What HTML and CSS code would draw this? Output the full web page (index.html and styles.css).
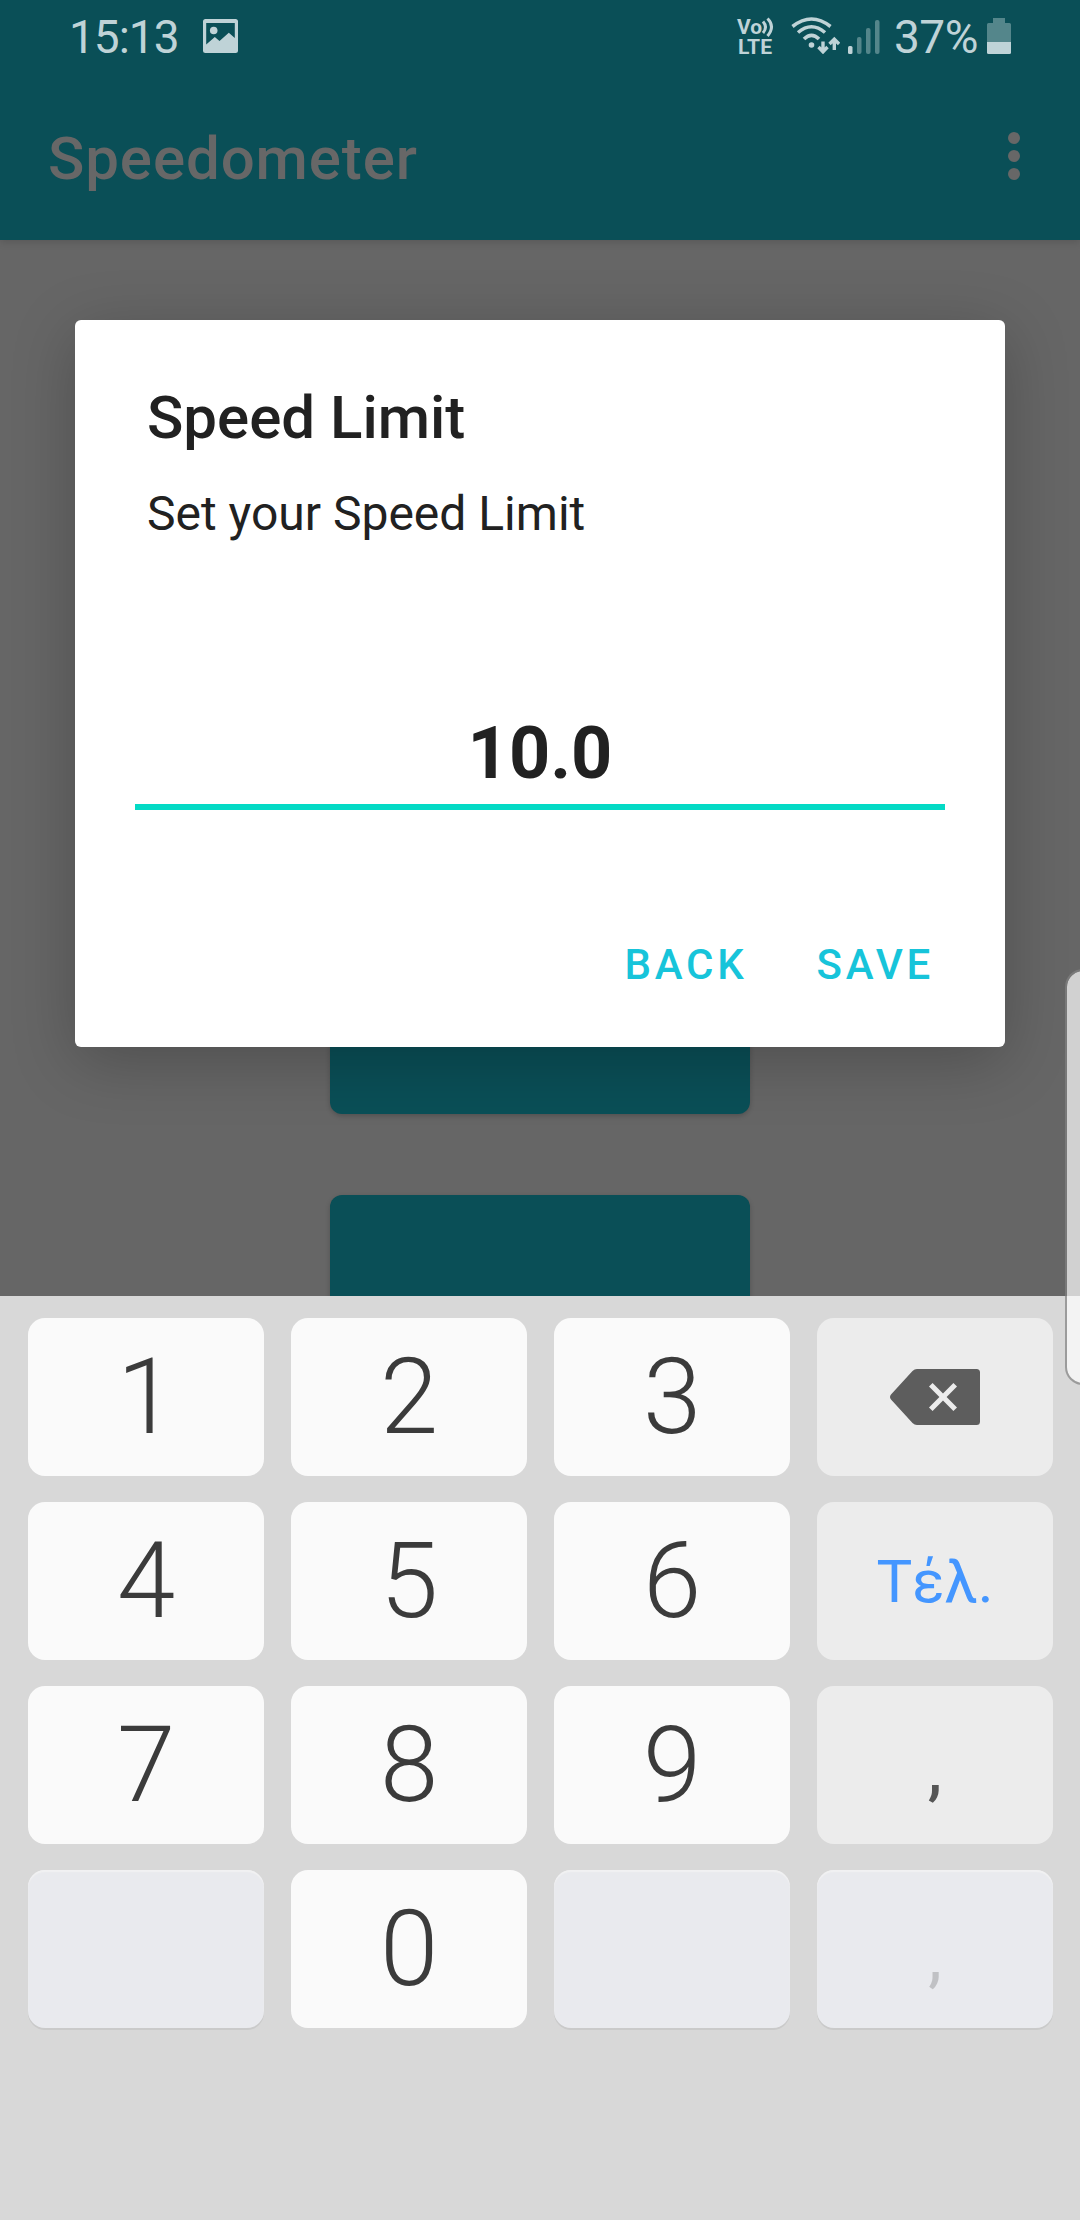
FILE: index.html
```html
<!DOCTYPE html>
<html lang="en">
<head>
<meta charset="utf-8">
<title>Speedometer</title>
<link rel="stylesheet" href="styles.css">
</head>
<body>
<div class="screen">
  <div class="app">
    <header class="top">
      <div class="status">
        <span class="clock">15:13</span>
        <svg class="ic-image" width="35" height="34" viewBox="0 0 35 34"><path fill-rule="evenodd" d="M2.500 0h30a2.500 2.500 0 0 1 2.500 2.500v29a2.500 2.500 0 0 1-2.500 2.500h-30A2.500 2.500 0 0 1 0 31.500v-29A2.500 2.500 0 0 1 2.500 0zM3.200 4v21.600l8.600-7.600 4.700 4 9.300-8.200 6 5.200V4z"/><circle cx="10.700" cy="11.500" r="3.800"/></svg>
        <svg class="ic-volte" width="38" height="44" viewBox="0 -3 38 44">
          <text class="volte-text" x="0" y="16.500" textLength="25" lengthAdjust="spacingAndGlyphs">Vo</text>
          <text class="volte-text" x="1" y="36.500" textLength="34" lengthAdjust="spacingAndGlyphs">LTE</text>
          <path class="line thin" d="M26 4.500q5 5.500 0 11.500M30.500 1.500q8 8 0 17.500"/>
        </svg>
        <svg class="ic-wifi" width="49" height="37" viewBox="0 0 49 37">
          <path class="line" d="M1.500 9.500Q20.500-5.500 39.500 9.500M7 15.500Q20.500 4 34 15.500M13 22Q20.500 14.500 28 22"/>
          <circle cx="20.500" cy="28" r="2.800"/>
          <path class="line arrow" d="M32 24.500v10M27.500 30l4.500 4.800 4.500-4.800M43.300 33V22.500M38.500 27l4.800-4.800 4.800 4.800"/>
        </svg>
        <svg class="ic-signal" width="32" height="34" viewBox="0 0 32 34"><rect x="0" y="26" width="4.500" height="8" rx="1.500"/><g class="dim"><rect x="9" y="17" width="4.500" height="17" rx="2"/><rect x="18" y="8" width="4.500" height="26" rx="2"/><rect x="27" y="0" width="4.500" height="34" rx="2"/></g></svg>
        <span class="percent">37%</span>
        <svg class="ic-battery" width="24" height="36" viewBox="0 0 24 36"><path class="dim" d="M6 0h12v5h4.500A1.500 1.500 0 0 1 24 6.500V24H0V6.500A1.500 1.500 0 0 1 1.500 5H6z"/><path d="M0 24h24v10.500a1.500 1.500 0 0 1-1.500 1.500h-21A1.500 1.500 0 0 1 0 34.500z"/></svg>
      </div>
      <div class="appbar">
        <h1 class="app-title">Speedometer</h1>
        <div class="overflow"><i></i><i></i><i></i></div>
      </div>
    </header>
    <main class="content">
      <div class="block"></div>
      <div class="block"></div>
    </main>
    <section class="dialog">
      <h2 class="dialog-title">Speed Limit</h2>
      <p class="dialog-text">Set your Speed Limit</p>
      <div class="field">10.0</div>
      <div class="actions"><span>BACK</span><span>SAVE</span></div>
    </section>
  </div>
  <div class="keyboard">
    <div class="key">1</div><div class="key">2</div><div class="key">3</div>
    <div class="key fn"><svg class="ic-del" width="90" height="56" viewBox="0 0 90 56"><path fill-rule="evenodd" d="M27 0h59.500A3.500 3.500 0 0 1 90 3.500v49a3.500 3.500 0 0 1-3.500 3.500H27q-2.500 0-4.500-2L1 30.500q-2-2.500 0-5L22.500 2Q24.500 0 27 0zM39 17.600L49.400 28 39 38.400 42.600 42 53 31.600 63.400 42 67 38.400 56.600 28 67 17.600 63.400 14 53 24.400 42.600 14z"/></svg></div>
    <div class="key">4</div><div class="key">5</div><div class="key">6</div>
    <div class="key fn done">Τέλ.</div>
    <div class="key">7</div><div class="key">8</div><div class="key">9</div>
    <div class="key fn comma">,</div>
    <div class="key off"></div><div class="key">0</div><div class="key off"></div>
    <div class="key off comma">,</div>
  </div>
  <div class="edge"></div>
</div>
</body>
</html>
```

FILE: styles.css
```css
* { box-sizing: border-box; }

body {
  margin: 0;
  font-family: Roboto, "Liberation Sans", sans-serif;
}

.screen {
  position: relative;
  width: 1080px;
  height: 2220px;
  overflow: hidden;
  display: flex;
  flex-direction: column;
}

.app {
  position: relative;
  height: 1296px;
  overflow: hidden;
  background: #666;
}

.top {
  position: relative;
  height: 240px;
  background: #0a4f57;
  box-shadow: 0 2px 8px rgba(0, 0, 0, .15);
}

.status {
  height: 72px;
  display: flex;
  align-items: flex-start;
  padding: 0 69px 0 69px;
  color: #bfd3d7;
  fill: #bfd3d7;
  font-size: 46px;
  line-height: 74px;
}

.status svg { flex: none; }
.dim { fill: #54868b; }
.line { fill: none; stroke: #bfd3d7; stroke-width: 3.600; }
.thin { stroke-width: 3; }
.arrow { stroke-width: 3.400; }
.volte-text { font-size: 21px; font-weight: 700; }

.clock { width: 134px; letter-spacing: -1px; }
.ic-image { margin-top: 19px; }
.ic-volte { margin: 14px 0 0 499px; overflow: visible; }
.ic-wifi { margin: 17px 0 0 16px; }
.ic-signal { margin: 20px 0 0 8px; }
.percent { width: 93px; margin-left: 14px; letter-spacing: -.5px; white-space: nowrap; }
.ic-battery { margin: 18px 0 0 0; }

.appbar {
  height: 168px;
  display: flex;
  justify-content: space-between;
  padding: 0 60px 0 48px;
  color: #676767;
}

.app-title {
  margin: 52px 0 0;
  font-size: 60px;
  font-weight: 500;
  letter-spacing: .9px;
  line-height: 70px;
}

.overflow {
  display: flex;
  flex-direction: column;
  gap: 6px;
  padding-top: 60px;
}

.overflow i { width: 12px; height: 12px; border-radius: 50%; background: #676767; }

.content {
  display: flex;
  flex-direction: column;
  align-items: center;
  gap: 81px;
  padding-top: 715px;
}

.block {
  width: 420px;
  height: 159px;
  flex: none;
  border-radius: 12px;
  background: #0a4f57;
  box-shadow: 0 2px 5px rgba(0, 0, 0, .2);
}

.dialog {
  position: absolute;
  left: 75px;
  top: 320px;
  width: 930px;
  height: 727px;
  padding: 63px 60px 0;
  border-radius: 6px;
  background: #fff;
  color: #212121;
  box-shadow: 0 14px 64px rgba(0, 0, 0, .23);
}

.dialog-title {
  margin: 0 0 33px 12px;
  font-size: 60px;
  font-weight: 500;
  line-height: 70px;
}

.dialog-text {
  margin: 0 0 170px 12px;
  font-size: 48px;
  line-height: 56px;
}

.field {
  height: 98px;
  border-bottom: 6px solid #03dac5;
  font-size: 72px;
  font-weight: 700;
  line-height: 84px;
  text-align: center;
}

.actions {
  display: flex;
  justify-content: flex-end;
  gap: 69px;
  margin-top: 130px;
  padding-right: 11px;
  color: #17c4da;
  font-size: 42px;
  font-weight: 500;
  letter-spacing: 3.750px;
  line-height: 50px;
}

.keyboard {
  height: 924px;
  display: grid;
  grid-template-columns: repeat(4, 236px);
  grid-auto-rows: 158px;
  align-content: start;
  gap: 26px 27px;
  padding: 22px 0 0 28px;
  background: #d8d8d8;
}

.key {
  border-radius: 17px;
  background: #fafafa;
  color: #3b3b3b;
  font-size: 105px;
  font-weight: 300;
  line-height: 160px;
  text-align: center;
}

.fn { background: #ececec; }
.off {
  background: #e9eaee;
  box-shadow: inset 0 2px 1px #f1f1f2, 0 2px 0 #cacaca;
}

.ic-del { display: block; margin: 51px 0 0 73px; fill: #5d5d5d; }
.done { color: #4496ff; font-size: 60px; font-weight: 400; }
.comma { color: #555; font-size: 64px; font-weight: 500; line-height: 170px; }
.off.comma { color: #c0c1c4; font-size: 69px; font-weight: 400; line-height: 172px; }

.edge {
  position: absolute;
  left: 1065px;
  top: 969px;
  width: 40px;
  height: 416px;
  border: 2px solid rgba(130, 130, 130, .7);
  border-radius: 18px;
  background: rgba(255, 255, 255, .7);
  background-clip: padding-box;
}
```
